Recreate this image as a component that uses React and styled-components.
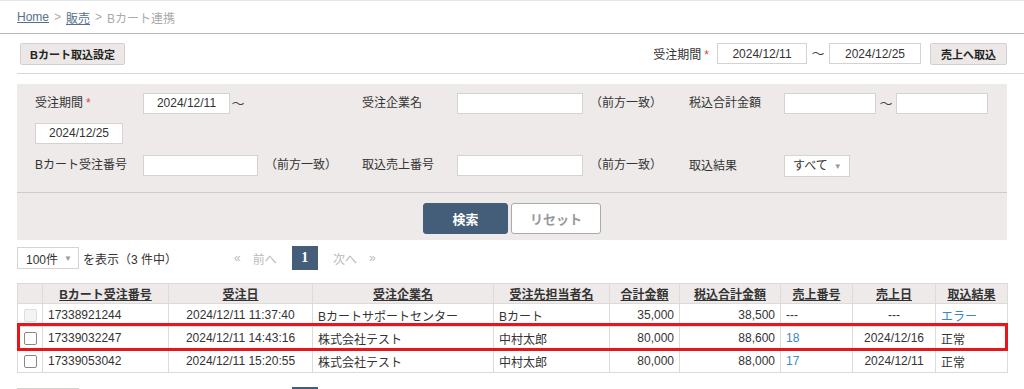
import React from 'react'
import styled, { createGlobalStyle } from 'styled-components'

const GlobalStyle = createGlobalStyle`
    html, body {
        margin: 0;
        padding: 0;
        overflow: hidden;
        background: #fff;
    }
    body {
        font-family: "Liberation Sans", "Noto Sans CJK JP", sans-serif;
        font-size: 12px;
        color: #333;
    }
`

const Page = styled.div`
    width: 1024px;
`

const Breadcrumb = styled.div`
    height: 32px;
    padding: 0 17px;
    display: flex;
    align-items: center;
    gap: 5px;
    border-top: 1px solid #e6e6e6;
    border-bottom: 1px solid #b8b8b8;
    color: #aaa;
    font-size: 12px;

    a {
        color: #55708c;
        text-decoration: underline;
    }
`

const Toolbar = styled.div`
    margin-left: 17px;
    padding-right: 17px;
    height: 39px;
    display: flex;
    align-items: center;
    border-bottom: 1px solid #d8d8d8;
`

const GrayButton = styled.button`
    height: 22px;
    padding: 0 ${p => p.pad || 9}px;
    background: #ebe8e7;
    border: 1px solid #d4d0cf;
    border-radius: 2px;
    font-family: inherit;
    font-size: 11px;
    font-weight: bold;
    color: #222;
    margin-left: ${p => p.ml || 0}px;
`

const Spacer = styled.div`
    flex: 1;
`

const Label = styled.span`
    color: #333;
    width: ${p => (p.w ? p.w + 'px' : 'auto')};
    flex-shrink: 0;
`

const Req = styled.span`
    color: #e0413a;
    margin-left: 3px;
`

const Input = styled.div`
    box-sizing: border-box;
    width: ${p => p.w}px;
    height: 21px;
    background: #fff;
    border: 1px solid #d5d2d1;
    display: flex;
    align-items: center;
    justify-content: center;
    color: #333;
    font-size: 12px;
    margin-left: ${p => p.ml || 0}px;
    margin-top: ${p => p.mt || 0}px;
`

const Tilde = styled.span`
    width: ${p => p.w || 20}px;
    text-align: center;
    font-size: 13px;
    line-height: 21px;
    color: #444;
`

const Panel = styled.div`
    margin: 10px 17px 0;
    background: #eeeae9;
    padding: 9px 10px 6px 18px;
`

const FieldGrid = styled.div`
    display: grid;
    grid-template-columns: 327px 327px 1fr;
    row-gap: 11px;
    align-items: start;
`

const Field = styled.div`
    display: flex;
    align-items: center;
    flex-wrap: wrap;
    min-height: 21px;
    line-height: 21px;
`

const Break = styled.div`
    flex-basis: 100%;
    height: 0;
`

const Note = styled.span`
    margin-left: 7px;
    color: #333;
`

const Select = styled.div`
    box-sizing: border-box;
    width: ${p => p.w}px;
    height: 22px;
    background: #fff;
    border: 1px solid #d5d2d1;
    display: flex;
    align-items: center;
    padding-left: 8px;
    gap: 6px;
    font-size: 12px;
    color: #333;

    &::after {
        content: "▼";
        font-size: 8px;
        color: #999;
    }
`

const PanelFooter = styled.div`
    margin: 15px -10px 0 -18px;
    border-top: 1px solid #cfcbca;
    padding-top: 10px;
    display: flex;
    justify-content: center;
    gap: 3px;
`

const ActionButton = styled.button`
    box-sizing: border-box;
    width: ${p => p.w}px;
    height: 31px;
    border-radius: 3px;
    font-family: inherit;
    font-size: 13px;
    font-weight: bold;
    border: 1px solid ${p => (p.primary ? '#445e7a' : '#aaa')};
    background: ${p => (p.primary ? '#445e7a' : '#fff')};
    color: ${p => (p.primary ? '#fff' : '#999')};
`

const Pager = styled.div`
    margin: 6px 17px 0;
    height: 24px;
    display: flex;
    align-items: center;
`

const PagerText = styled.span`
    margin-left: 4px;
    color: #333;
`

const PageLinks = styled.div`
    margin-left: 57px;
    display: flex;
    align-items: center;
    color: #bbb;
    font-size: 12px;
    gap: 12px;
`

const PageNo = styled.span`
    width: 26px;
    height: 24px;
    margin-left: 3px;
    background: #445e7a;
    color: #fff;
    font-family: "Liberation Serif", serif;
    font-weight: bold;
    font-size: 14px;
    display: flex;
    align-items: center;
    justify-content: center;
`

const TableWrap = styled.div`
    position: relative;
    margin: 13px 17px 0;
`

const Table = styled.table`
    width: 990px;
    border-collapse: collapse;
    table-layout: fixed;
    font-size: 12px;

    th, td {
        border: 1px solid #dddada;
        padding: 0 5px;
        white-space: nowrap;
        overflow: hidden;
    }
    th {
        height: 19px;
        background: #eeeae9;
        font-weight: bold;
        font-size: 12px;
        color: #333;
        text-decoration: underline;
        text-align: center;
    }
    td {
        height: 22px;
        color: #333;
    }
`

const Cell = styled.td`
    text-align: ${p => p.align || 'left'};
    color: ${p => (p.link ? '#3a88c5' : '#333')} !important;
`

const Check = styled.span`
    display: block;
    width: 11px;
    height: 11px;
    margin: 0 auto;
    border: 1px solid ${p => (p.disabled ? '#ddd' : '#888')};
    border-radius: 2px;
    background: ${p => (p.disabled ? '#f4f4f4' : '#fff')};
`

const Highlight = styled.div`
    position: absolute;
    left: 0;
    top: 40px;
    width: 991px;
    height: 28px;
    box-sizing: border-box;
    border: 3px solid #e8161b;
    pointer-events: none;
`

const BottomPager = styled(Pager)`
    margin-top: 14px;
`

const cols = [25, 126, 144, 181, 116, 70, 101, 72, 83, 72]

const rows = [
    { no: '17338921244', date: '2024/12/11 11:37:40', company: 'Bカートサポートセンター', person: 'Bカート', total: '35,000', tax: '38,500', sale: '---', saleDate: '---', result: 'エラー', disabled: true },
    { no: '17339032247', date: '2024/12/11 14:43:16', company: '株式会社テスト', person: '中村太郎', total: '80,000', tax: '88,600', sale: '18', saleDate: '2024/12/16', result: '正常' },
    { no: '17339053042', date: '2024/12/11 15:20:55', company: '株式会社テスト', person: '中村太郎', total: '80,000', tax: '88,000', sale: '17', saleDate: '2024/12/11', result: '正常' },
]

function Pagination({ as }) {
    const Wrap = as || Pager
    return (
        <Wrap>
            <Select w={62}>100件</Select>
            <PagerText>を表示（3 件中）</PagerText>
            <PageLinks>
                <span>«</span>
                <span>前へ</span>
                <PageNo>1</PageNo>
                <span>&nbsp;次へ</span>
                <span>»</span>
            </PageLinks>
        </Wrap>
    )
}

export default function App() {
    return (
        <Page>
            <GlobalStyle />
            <Breadcrumb>
                <a>Home</a>
                <span>&gt;</span>
                <a>販売</a>
                <span>&gt;</span>
                <span>Bカート連携</span>
            </Breadcrumb>

            <Toolbar>
                <GrayButton ml={3}>Bカート取込設定</GrayButton>
                <Spacer />
                <Label>受注期間<Req>*</Req></Label>
                <Input w={90} ml={8}>2024/12/11</Input>
                <Tilde w={22}>〜</Tilde>
                <Input w={92}>2024/12/25</Input>
                <GrayButton ml={9} pad={10}>売上へ取込</GrayButton>
            </Toolbar>

            <Panel>
                <FieldGrid>
                    <Field>
                        <Label w={108}>受注期間<Req>*</Req></Label>
                        <Input w={87}>2024/12/11</Input>
                        <Tilde w={16}>〜</Tilde>
                        <Break />
                        <Input w={88} mt={9}>2024/12/25</Input>
                    </Field>
                    <Field>
                        <Label w={95}>受注企業名</Label>
                        <Input w={126} />
                        <Note>（前方一致）</Note>
                    </Field>
                    <Field>
                        <Label w={95}>税込合計金額</Label>
                        <Input w={92} />
                        <Tilde w={20}>〜</Tilde>
                        <Input w={92} />
                    </Field>

                    <Field>
                        <Label w={108}>Bカート受注番号</Label>
                        <Input w={115} />
                        <Note>（前方一致）</Note>
                    </Field>
                    <Field>
                        <Label w={95}>取込売上番号</Label>
                        <Input w={126} />
                        <Note>（前方一致）</Note>
                    </Field>
                    <Field>
                        <Label w={95}>取込結果</Label>
                        <Select w={66}>すべて</Select>
                    </Field>
                </FieldGrid>
                <PanelFooter>
                    <ActionButton primary w={85}>検索</ActionButton>
                    <ActionButton w={90}>リセット</ActionButton>
                </PanelFooter>
            </Panel>

            <Pagination />

            <TableWrap>
                <Table>
                    <colgroup>
                        {cols.map((w, i) => <col key={i} style={{ width: w }} />)}
                    </colgroup>
                    <thead>
                        <tr>
                            <th />
                            <th>Bカート受注番号</th>
                            <th>受注日</th>
                            <th>受注企業名</th>
                            <th>受注先担当者名</th>
                            <th>合計金額</th>
                            <th>税込合計金額</th>
                            <th>売上番号</th>
                            <th>売上日</th>
                            <th>取込結果</th>
                        </tr>
                    </thead>
                    <tbody>
                        {rows.map(r => (
                            <tr key={r.no}>
                                <Cell align="center"><Check disabled={r.disabled} /></Cell>
                                <Cell>{r.no}</Cell>
                                <Cell align="center">{r.date}</Cell>
                                <Cell>{r.company}</Cell>
                                <Cell>{r.person}</Cell>
                                <Cell align="right">{r.total}</Cell>
                                <Cell align="right">{r.tax}</Cell>
                                <Cell link={r.sale !== '---'}>{r.sale}</Cell>
                                <Cell align="center">{r.saleDate}</Cell>
                                <Cell link={r.result === 'エラー'}>{r.result}</Cell>
                            </tr>
                        ))}
                    </tbody>
                </Table>
                <Highlight />
            </TableWrap>

            <Pagination as={BottomPager} />
        </Page>
    )
}
